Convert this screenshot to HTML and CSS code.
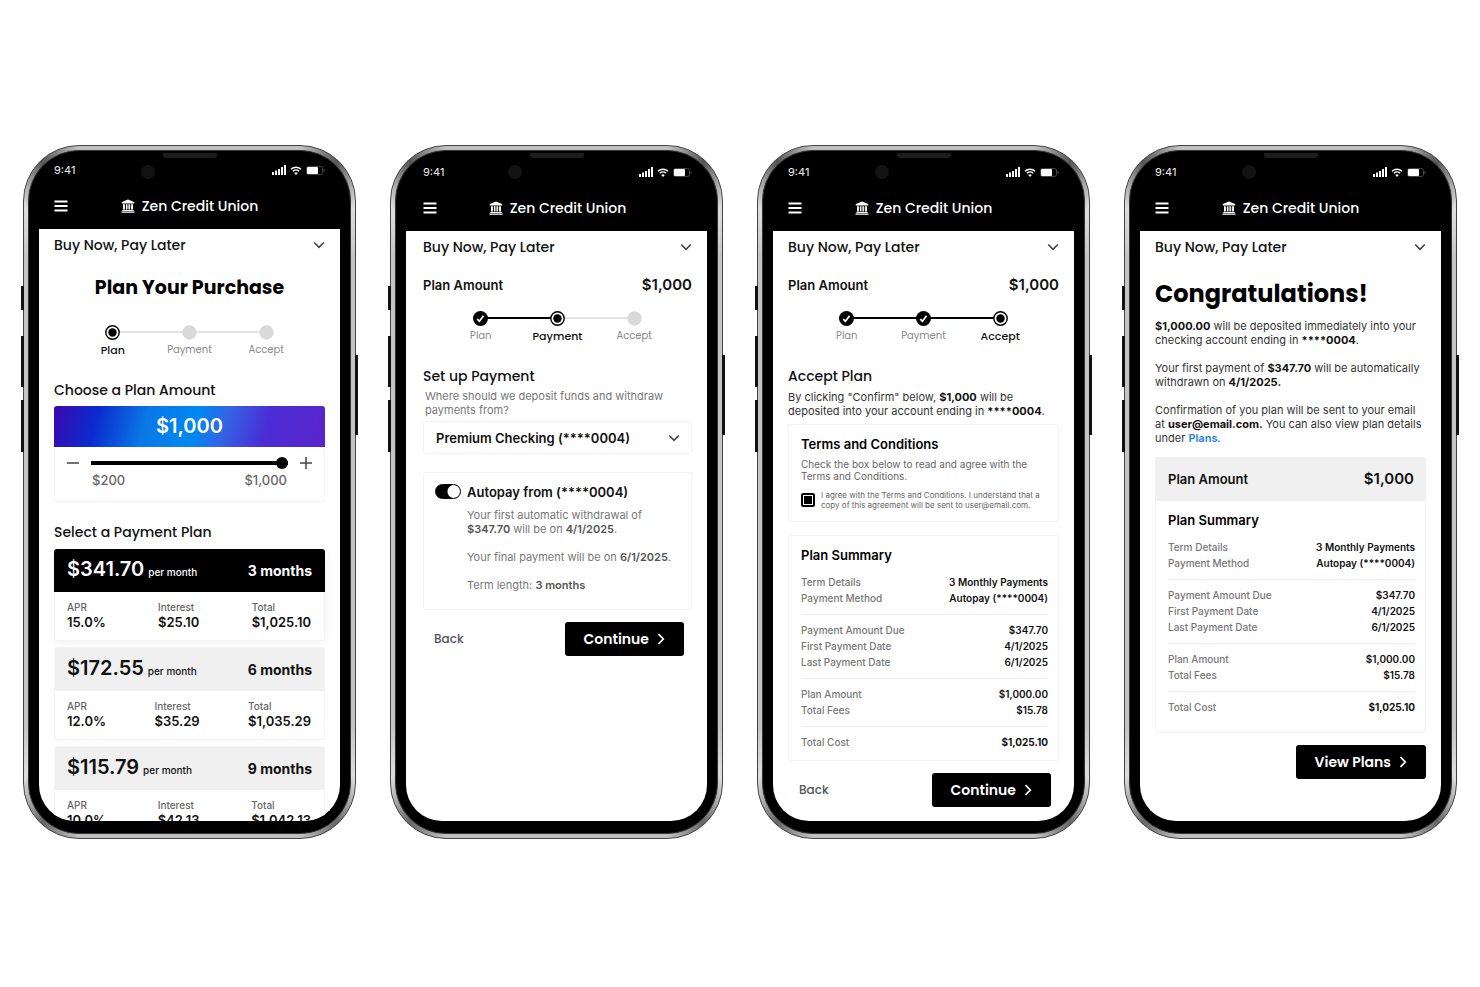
FILE: index.html
```
<!DOCTYPE html>
<html lang="en">
<head>
  <meta charset="UTF-8" />
  <meta name="viewport" content="width=device-width, initial-scale=1.0" />
  <title>Buy Now, Pay Later | Zen Credit Union</title>
  <link rel="stylesheet" href="styles.css">
</head>
<body>

<!-- shared icons -->
<svg class="sprite" aria-hidden="true">
  <symbol id="i-menu" viewBox="0 0 14 12">
    <path d="M0.5 1.5h13M0.5 6h13M0.5 10.5h13" stroke="currentColor" stroke-width="1.8" fill="none" />
  </symbol>
  <symbol id="i-bank" viewBox="0 0 14 14">
    <path fill="currentColor" d="M7 0.4L13.2 3v1.6H0.8V3zM2 5.2h1.9v5.4H2zM4.9 5.2h1.1v5.4H4.9zM6.5 5.2h1.1v5.4H6.5zM8.1 5.2h1.1v5.4H8.1zM10.1 5.2H12v5.4h-1.9zM1.3 11h11.4v1H1.3zM0.5 12.4h13v1.3h-13z" />
  </symbol>
  <symbol id="i-signal" viewBox="0 0 14 10">
    <path fill="currentColor" d="M0 7h2v3H0zM3 5.5h2V10H3zM6 4h2v6H6zM9 2h2v8H9zM12 0h2v10h-2z" />
  </symbol>
  <symbol id="i-wifi" viewBox="0 0 12 9">
    <path d="M1 3.2a7.2 7.2 0 0 1 10 0M2.9 5.2a4.5 4.5 0 0 1 6.2 0" stroke="currentColor" stroke-width="1.4" fill="none" />
    <path fill="currentColor" d="M6 8.9L4.2 7a2.600 2.600 0 0 1 3.600 0z" />
  </symbol>
  <symbol id="i-battery" viewBox="0 0 19 9">
    <rect x="0.5" y="0.5" width="16" height="8" rx="2" fill="none" stroke="#444" />
    <rect x="1" y="1" width="11" height="7" rx="1" fill="currentColor" />
    <path d="M18 3v3" stroke="#444" />
  </symbol>
  <symbol id="i-down" viewBox="0 0 12 8">
    <path d="M1.2 1.5L6 6.3l4.8-4.8" stroke="currentColor" stroke-width="1.600" fill="none" />
  </symbol>
  <symbol id="i-right" viewBox="0 0 8 12">
    <path d="M1.5 1.2L6.3 6l-4.8 4.8" stroke="currentColor" stroke-width="1.700" fill="none" />
  </symbol>
  <symbol id="i-done" viewBox="0 0 15 15">
    <circle cx="7.5" cy="7.5" r="7.5" fill="#000" />
    <path d="M4.2 8.2l2.200 2 4.200-5.400" stroke="#fff" stroke-width="1.700" fill="none" />
  </symbol>
  <symbol id="i-current" viewBox="0 0 15 15">
    <circle cx="7.5" cy="7.5" r="6.700" fill="#fff" stroke="#000" stroke-width="1.400" />
    <circle cx="7.5" cy="7.5" r="4.200" fill="#000" />
  </symbol>
  <symbol id="i-todo" viewBox="0 0 15 15">
    <circle cx="7.5" cy="7.5" r="7.200" fill="#d9d9d9" />
  </symbol>
  <symbol id="i-minus" viewBox="0 0 12 12">
    <path d="M0 6h12" stroke="currentColor" stroke-width="1.500" />
  </symbol>
  <symbol id="i-plus" viewBox="0 0 12 12">
    <path d="M0 6h12M6 0v12" stroke="currentColor" stroke-width="1.500" />
  </symbol>
</svg>

<main class="phones">

  <!-- Step 1: plan -->
  <section class="phone phone-plan">
    <div class="bezel">
      <div class="status">
        <span>9:41</span>
        <span class="status-icons">
          <svg width="14" height="10"><use href="#i-signal" /></svg>
          <svg width="12" height="9"><use href="#i-wifi" /></svg>
          <svg width="19" height="9"><use href="#i-battery" /></svg>
        </span>
      </div>
      <header class="appbar">
        <button type="button" class="menu" aria-label="Menu"><svg width="14" height="12"><use href="#i-menu" /></svg></button>
        <div class="brand"><svg width="14" height="14"><use href="#i-bank" /></svg>Zen Credit Union</div>
      </header>
      <div class="screen">
        <button type="button" class="product">Buy Now, Pay Later <svg width="12" height="8"><use href="#i-down" /></svg></button>
        <h1 class="title">Plan Your Purchase</h1>
        <ol class="stepper">
          <li class="current"><svg width="15" height="15"><use href="#i-current" /></svg>Plan</li>
          <li><svg width="15" height="15"><use href="#i-todo" /></svg>Payment</li>
          <li><svg width="15" height="15"><use href="#i-todo" /></svg>Accept</li>
        </ol>

        <h2>Choose a Plan Amount</h2>
        <div class="card amount">
          <output class="amount-value" for="amount">$1,000</output>
          <div class="amount-slider">
            <button type="button" aria-label="Decrease"><svg width="12" height="12"><use href="#i-minus" /></svg></button>
            <input type="range" id="amount" aria-label="Plan amount" min="200" max="1000" value="1000" />
            <button type="button" aria-label="Increase"><svg width="12" height="12"><use href="#i-plus" /></svg></button>
          </div>
          <div class="amount-range"><span>$200</span><span>$1,000</span></div>
        </div>

        <h2>Select a Payment Plan</h2>
        <div class="plans">
          <article class="card plan selected">
            <div class="plan-head"><p><b>$341.70</b> per month</p><strong>3 months</strong></div>
            <dl>
              <div><dt>APR</dt><dd>15.0%</dd></div>
              <div><dt>Interest</dt><dd>$25.10</dd></div>
              <div><dt>Total</dt><dd>$1,025.10</dd></div>
            </dl>
          </article>
          <article class="card plan">
            <div class="plan-head"><p><b>$172.55</b> per month</p><strong>6 months</strong></div>
            <dl>
              <div><dt>APR</dt><dd>12.0%</dd></div>
              <div><dt>Interest</dt><dd>$35.29</dd></div>
              <div><dt>Total</dt><dd>$1,035.29</dd></div>
            </dl>
          </article>
          <article class="card plan">
            <div class="plan-head"><p><b>$115.79</b> per month</p><strong>9 months</strong></div>
            <dl>
              <div><dt>APR</dt><dd>10.0%</dd></div>
              <div><dt>Interest</dt><dd>$42.13</dd></div>
              <div><dt>Total</dt><dd>$1,042.13</dd></div>
            </dl>
          </article>
        </div>
      </div>
    </div>
  </section>

  <!-- Step 2: payment -->
  <section class="phone phone-payment">
    <div class="bezel">
      <div class="status">
        <span>9:41</span>
        <span class="status-icons">
          <svg width="14" height="10"><use href="#i-signal" /></svg>
          <svg width="12" height="9"><use href="#i-wifi" /></svg>
          <svg width="19" height="9"><use href="#i-battery" /></svg>
        </span>
      </div>
      <header class="appbar">
        <button type="button" class="menu" aria-label="Menu"><svg width="14" height="12"><use href="#i-menu" /></svg></button>
        <div class="brand"><svg width="14" height="14"><use href="#i-bank" /></svg>Zen Credit Union</div>
      </header>
      <div class="screen">
        <button type="button" class="product">Buy Now, Pay Later <svg width="12" height="8"><use href="#i-down" /></svg></button>
        <p class="plan-amount"><span>Plan Amount</span><b>$1,000</b></p>
        <ol class="stepper">
          <li class="done"><svg width="15" height="15"><use href="#i-done" /></svg>Plan</li>
          <li class="current"><svg width="15" height="15"><use href="#i-current" /></svg>Payment</li>
          <li><svg width="15" height="15"><use href="#i-todo" /></svg>Accept</li>
        </ol>

        <h2>Set up Payment</h2>
        <label class="hint" for="account">Where should we deposit funds and withdraw payments from?</label>
        <div class="card account">
          <select id="account">
            <option>Premium Checking (****0004)</option>
          </select>
          <svg width="12" height="8"><use href="#i-down" /></svg>
        </div>

        <div class="card autopay">
          <input type="checkbox" class="toggle" id="autopay" checked />
          <div>
            <label for="autopay">Autopay from (****0004)</label>
            <p>Your first automatic withdrawal of <b>$347.70</b> will be on <b>4/1/2025</b>.</p>
            <p>Your final payment will be on <b>6/1/2025</b>.</p>
            <p>Term length: <b>3 months</b></p>
          </div>
        </div>

        <div class="actions">
          <button type="button" class="back">Back</button>
          <button type="button" class="primary">Continue <svg width="8" height="12"><use href="#i-right" /></svg></button>
        </div>
      </div>
    </div>
  </section>

  <!-- Step 3: accept -->
  <section class="phone">
    <div class="bezel">
      <div class="status">
        <span>9:41</span>
        <span class="status-icons">
          <svg width="14" height="10"><use href="#i-signal" /></svg>
          <svg width="12" height="9"><use href="#i-wifi" /></svg>
          <svg width="19" height="9"><use href="#i-battery" /></svg>
        </span>
      </div>
      <header class="appbar">
        <button type="button" class="menu" aria-label="Menu"><svg width="14" height="12"><use href="#i-menu" /></svg></button>
        <div class="brand"><svg width="14" height="14"><use href="#i-bank" /></svg>Zen Credit Union</div>
      </header>
      <div class="screen">
        <button type="button" class="product">Buy Now, Pay Later <svg width="12" height="8"><use href="#i-down" /></svg></button>
        <p class="plan-amount"><span>Plan Amount</span><b>$1,000</b></p>
        <ol class="stepper">
          <li class="done"><svg width="15" height="15"><use href="#i-done" /></svg>Plan</li>
          <li class="done"><svg width="15" height="15"><use href="#i-done" /></svg>Payment</li>
          <li class="current"><svg width="15" height="15"><use href="#i-current" /></svg>Accept</li>
        </ol>

        <h2>Accept Plan</h2>
        <p class="copy">By clicking "Confirm" below, <b>$1,000</b> will be deposited into your account ending in <b>****0004</b>.</p>

        <div class="card terms">
          <h3>Terms and Conditions</h3>
          <p>Check the box below to read and agree with the Terms and Conditions.</p>
          <div class="agree">
            <input type="checkbox" id="agree" checked />
            <label for="agree">I agree with the Terms and Conditions. I understand that a copy of this agreement will be sent to user@email.com.</label>
          </div>
        </div>

        <div class="card summary">
          <h3>Plan Summary</h3>
          <table>
            <tbody>
              <tr><th scope="row">Term Details</th><td>3 Monthly Payments</td></tr>
              <tr><th scope="row">Payment Method</th><td>Autopay (****0004)</td></tr>
            </tbody>
            <tbody>
              <tr><th scope="row">Payment Amount Due</th><td>$347.70</td></tr>
              <tr><th scope="row">First Payment Date</th><td>4/1/2025</td></tr>
              <tr><th scope="row">Last Payment Date</th><td>6/1/2025</td></tr>
            </tbody>
            <tbody>
              <tr><th scope="row">Plan Amount</th><td>$1,000.00</td></tr>
              <tr><th scope="row">Total Fees</th><td>$15.78</td></tr>
            </tbody>
            <tbody class="total">
              <tr><th scope="row">Total Cost</th><td>$1,025.10</td></tr>
            </tbody>
          </table>
        </div>

        <div class="actions">
          <button type="button" class="back">Back</button>
          <button type="button" class="primary">Continue <svg width="8" height="12"><use href="#i-right" /></svg></button>
        </div>
      </div>
    </div>
  </section>

  <!-- Confirmation -->
  <section class="phone">
    <div class="bezel">
      <div class="status">
        <span>9:41</span>
        <span class="status-icons">
          <svg width="14" height="10"><use href="#i-signal" /></svg>
          <svg width="12" height="9"><use href="#i-wifi" /></svg>
          <svg width="19" height="9"><use href="#i-battery" /></svg>
        </span>
      </div>
      <header class="appbar">
        <button type="button" class="menu" aria-label="Menu"><svg width="14" height="12"><use href="#i-menu" /></svg></button>
        <div class="brand"><svg width="14" height="14"><use href="#i-bank" /></svg>Zen Credit Union</div>
      </header>
      <div class="screen">
        <button type="button" class="product">Buy Now, Pay Later <svg width="12" height="8"><use href="#i-down" /></svg></button>
        <h1 class="congrats">Congratulations!</h1>
        <div class="copy">
          <p><b>$1,000.00</b> will be deposited immediately into your checking account ending in <b>****0004</b>.</p>
          <p>Your first payment of <b>$347.70</b> will be automatically withdrawn on <b>4/1/2025.</b></p>
          <p>Confirmation of you plan will be sent to your email at <b>user@email.com.</b> You can also view plan details under <a href="#plans">Plans</a>.</p>
        </div>

        <div class="card summary receipt">
          <p class="receipt-head"><span>Plan Amount</span><b>$1,000</b></p>
          <h3>Plan Summary</h3>
          <table>
            <tbody>
              <tr><th scope="row">Term Details</th><td>3 Monthly Payments</td></tr>
              <tr><th scope="row">Payment Method</th><td>Autopay (****0004)</td></tr>
            </tbody>
            <tbody>
              <tr><th scope="row">Payment Amount Due</th><td>$347.70</td></tr>
              <tr><th scope="row">First Payment Date</th><td>4/1/2025</td></tr>
              <tr><th scope="row">Last Payment Date</th><td>6/1/2025</td></tr>
            </tbody>
            <tbody>
              <tr><th scope="row">Plan Amount</th><td>$1,000.00</td></tr>
              <tr><th scope="row">Total Fees</th><td>$15.78</td></tr>
            </tbody>
            <tbody class="total">
              <tr><th scope="row">Total Cost</th><td>$1,025.10</td></tr>
            </tbody>
          </table>
        </div>

        <div class="actions end">
          <button type="button" class="primary">View Plans <svg width="8" height="12"><use href="#i-right" /></svg></button>
        </div>
      </div>
    </div>
  </section>

</main>

</body>
</html>
```
FILE: styles.css
```
* {
  box-sizing: border-box;
}
body {
  font-family: Inter, sans-serif;
  font-size: 11px;
  line-height: 14px;
  background: #fff;
  color: #111;
  margin: 0;
}
h1, h2, h3, p, ol, dl, dd {
  margin: 0;
  padding: 0;
}
button {
  font: inherit;
  color: inherit;
  background: none;
  border: none;
  padding: 0;
  cursor: pointer;
}
svg {
  display: block;
  flex: none;
}
.sprite {
  position: absolute;
  width: 0;
  height: 0;
}

.brand, .product, .title, .congrats, .stepper, .actions, h2 {
  font-family: Poppins, Inter, sans-serif;
}

.phones {
  display: grid;
  grid-template-columns: repeat(4, 1fr);
  gap: 34px;
  padding: 145px 23px;
}

/* device */
.phone {
  position: relative;
  aspect-ratio: 333 / 694;
  padding: 4px;
  border: 1px solid #444;
  border-radius: 56px;
  background: conic-gradient(from 0deg, #c0c0c0 0 18deg, #555 24deg, #ddd 30deg, #c4c4c4 35deg 145deg, #ddd 150deg, #666 156deg, #c0c0c0 162deg 198deg, #666 204deg, #ddd 210deg, #c4c4c4 215deg 325deg, #ddd 330deg, #555 336deg, #c0c0c0 342deg);
}
.phone::before,
.phone::after {
  content: "";
  position: absolute;
  width: 3px;
}
.phone::before {
  left: -3px;
  top: 140px;
  height: 166px;
  background: linear-gradient(#111 0 24px, transparent 24px 50px, #111 50px 101px, transparent 101px 114px, #111 114px);
}
.phone::after {
  right: -3px;
  top: 209px;
  height: 80px;
  background: #111;
}
.bezel {
  position: relative;
  display: flex;
  flex-direction: column;
  height: 100%;
  padding: 0 10px 12px;
  border: 1px solid #333;
  border-radius: 51px;
  background: #000;
}
.bezel::before,
.bezel::after {
  content: "";
  position: absolute;
}
.bezel::before {
  top: 2px;
  left: 50%;
  width: 54px;
  height: 5px;
  margin-left: -27px;
  border-radius: 0 0 3px 3px;
  background: #1c1c1c;
}
.bezel::after {
  top: 14px;
  left: 35%;
  width: 14px;
  height: 14px;
  border-radius: 50%;
  background: #131313;
}
.status {
  display: flex;
  justify-content: space-between;
  align-items: center;
  height: 30px;
  padding: 12px 15px 0;
  color: #eee;
}
.status-icons {
  display: flex;
  align-items: center;
  gap: 4px;
  color: #fff;
}
.appbar {
  display: grid;
  grid-template-columns: 1fr auto 1fr;
  align-items: center;
  height: 50px;
  padding: 4px 15px 0;
  color: #fff;
}
.brand {
  display: flex;
  align-items: center;
  gap: 7px;
  font-size: 14px;
  font-weight: 500;
}
.phone-plan .status {
  height: 28px;
  padding-top: 10px;
}

.screen {
  flex: 1;
  min-height: 0;
  overflow: hidden;
  padding: 0 15px;
  border-radius: 0 0 36px 36px;
  background: #fff;
}
.phone-payment .screen,
.phone-payment .appbar,
.phone-payment .status {
  padding-left: 17px;
}
.product {
  display: flex;
  justify-content: space-between;
  align-items: center;
  width: 100%;
  height: 32px;
  font-size: 14px;
  font-weight: 500;
}
.product svg {
  color: #444;
}
.title {
  margin-top: 13px;
  font-size: 19px;
  line-height: 28px;
  text-align: center;
  color: #000;
}
.congrats {
  margin: 14px 0 8px;
  font-size: 24px;
  line-height: 34px;
  color: #000;
}
h2 {
  font-size: 14px;
  line-height: 20px;
  font-weight: 500;
}
h3 {
  font-size: 13px;
  line-height: 16px;
  font-weight: 600;
  color: #000;
}
.plan-amount {
  display: flex;
  justify-content: space-between;
  align-items: center;
  height: 20px;
  margin-top: 12px;
  font-size: 13px;
  font-weight: 600;
}
.plan-amount b, .receipt-head b {
  font-size: 15px;
  font-weight: 600;
}

/* stepper */
.stepper {
  display: grid;
  grid-template-columns: repeat(3, 1fr);
  width: 230px;
  margin: 16px auto 23px;
  list-style: none;
  font-size: 10px;
  color: #888;
}
.stepper li {
  position: relative;
  display: flex;
  flex-direction: column;
  align-items: center;
  gap: 3px;
}
.stepper li + li::before {
  content: "";
  position: absolute;
  top: 6px;
  right: 50%;
  width: 100%;
  height: 2px;
  background: #e4e4e4;
}
.stepper .done + li::before {
  background: #000;
}
.stepper svg {
  position: relative;
  z-index: 1;
}
.stepper .current {
  font-size: 11px;
  font-weight: 500;
  color: #111;
}
.phone-plan .stepper {
  margin-top: 23px;
}

/* cards */
.card {
  border: 1px solid #f4f4f4;
  border-radius: 3px;
  background: #fff;
}
.amount {
  height: 96px;
  margin: 6px 0 20px;
}
.amount-value {
  display: block;
  margin: -1px -1px 0;
  border-radius: 3px 3px 0 0;
  background: linear-gradient(105deg, #3c08b0 0, #0a2bcd 16%, #0a78e6 34%, #0088f0 52%, #3265e6 62%, #4b2bd4 78%, #5a24cc 100%);
  color: #fff;
  font-size: 20px;
  line-height: 41px;
  font-weight: 600;
  text-align: center;
}
.amount-slider {
  display: flex;
  align-items: center;
  gap: 12px;
  height: 16px;
  margin-top: 8px;
  padding: 0 12px;
  color: #444;
}
.amount-slider input {
  flex: 1;
  min-width: 0;
  height: 12px;
  margin: 0;
  appearance: none;
  background: linear-gradient(#000, #000) center / 100% 4px no-repeat;
}
.amount-slider input::-webkit-slider-thumb {
  appearance: none;
  width: 12px;
  height: 12px;
  border-radius: 50%;
  background: #000;
}
.amount-range {
  display: flex;
  justify-content: space-between;
  padding: 1px 37px 0;
  font-size: 13px;
  line-height: 16px;
  font-weight: 500;
  color: #666;
}
.plans {
  display: grid;
  gap: 6px;
  margin-top: 7px;
}
.plan.selected {
  box-shadow: 0 2px 12px rgba(0,0,0,0.05);
}
.plan-head {
  display: flex;
  justify-content: space-between;
  align-items: center;
  height: 43px;
  padding: 0 12px;
  background: #f0f0f0;
  font-size: 10px;
  font-weight: 500;
}
.plan-head p {
  display: flex;
  align-items: baseline;
  gap: 4px;
  line-height: 24px;
}
.plan-head b {
  font-size: 20px;
  font-weight: 600;
}
.plan-head strong {
  font-size: 14px;
  font-weight: 700;
}
.plan.selected .plan-head {
  margin: -1px -1px 0;
  padding: 0 13px;
  border-radius: 3px 3px 0 0;
  background: #000;
  color: #fff;
}
.plan dl {
  display: flex;
  justify-content: space-between;
  padding: 8px 13px 9px 12px;
}
.plan dt {
  font-size: 10px;
  font-weight: 500;
  color: #666;
}
.plan dd {
  font-size: 13px;
  line-height: 17px;
  font-weight: 600;
}

/* payment */
.hint {
  display: block;
  margin-top: 3px;
  padding: 0 2px;
  color: #777;
}
.account {
  display: grid;
  align-items: center;
  margin: 4px 0 18px;
}
.account select, .account svg {
  grid-area: 1 / 1;
}
.account select {
  width: 100%;
  height: 31px;
  padding: 0 12px;
  border: none;
  appearance: none;
  background: none;
  color: #111;
  font: 600 13px Inter, sans-serif;
}
.account svg {
  justify-self: end;
  margin-right: 11px;
  color: #444;
}
.autopay {
  display: flex;
  gap: 6px;
  padding: 11px 11px 17px;
  color: #777;
}
.autopay label {
  font-size: 13px;
  line-height: 16px;
  font-weight: 600;
  color: #111;
}
.autopay p {
  margin-top: 14px;
}
.autopay label + p {
  margin-top: 8px;
}
.autopay b {
  font-weight: 600;
  color: #555;
}
.toggle {
  flex: none;
  width: 26px;
  height: 15px;
  margin: 0;
  border: 1px solid #000;
  border-radius: 8px;
  appearance: none;
  background: radial-gradient(circle at 6px 50%, #000 6px, #fff 7px);
}
.toggle:checked {
  background: radial-gradient(circle at 18px 50%, #fff 6px, #000 7px);
}
.actions {
  display: flex;
  justify-content: space-between;
  align-items: center;
  margin-top: 12px;
  padding: 0 8px 0 11px;
}
.actions.end {
  justify-content: flex-end;
  padding: 0;
}
.back {
  font-size: 12px;
  font-weight: 500;
  color: #555;
}
.primary {
  display: flex;
  align-items: center;
  gap: 8px;
  height: 34px;
  padding: 0 19px;
  border-radius: 3px;
  background: #000;
  color: #fff;
  font-size: 14px;
  font-weight: 600;
}

/* terms and summary */
.copy {
  margin-top: 4px;
  color: #333;
}
.copy p + p {
  margin-top: 14px;
}
.copy b {
  font-weight: 700;
  color: #111;
}
.copy a {
  color: #1f7fe0;
  font-weight: 600;
  text-decoration: none;
}
.terms {
  margin: 6px 0 13px;
  padding: 11px 12px;
  font-size: 10px;
  line-height: 12px;
  color: #666;
}
.terms p {
  margin-top: 6px;
}
.agree {
  display: flex;
  align-items: center;
  gap: 6px;
  margin-top: 8px;
}
.agree label {
  font-size: 8px;
  line-height: 10px;
}
.agree input {
  flex: none;
  width: 14px;
  height: 14px;
  margin: 0;
  border: 2px solid #000;
  border-radius: 2px;
  appearance: none;
}
.agree input:checked {
  background: linear-gradient(#000, #000) center / 8px 8px no-repeat;
}
.summary {
  padding: 11px 10px 2px 12px;
}
.summary table {
  width: 100%;
  margin-top: 3px;
  border-collapse: collapse;
}
.summary tbody + tbody {
  border-top: 1px solid #eee;
}
.summary th, .summary td {
  height: 16px;
  padding: 0;
  font-size: 10px;
}
.summary th {
  font-weight: 500;
  text-align: left;
  color: #777;
}
.summary td {
  font-weight: 600;
  text-align: right;
}
.summary .total td {
  font-weight: 700;
}
.summary tr:first-child > * {
  height: 24px;
  padding-top: 8px;
}
.summary tr:last-child > * {
  height: 24px;
  padding-bottom: 8px;
}
.summary tr:only-child > * {
  height: 32px;
}
.summary.receipt {
  margin-top: 12px;
  padding-bottom: 9px;
}
.receipt-head {
  display: flex;
  justify-content: space-between;
  align-items: center;
  height: 44px;
  margin: -12px -11px 11px -13px;
  padding: 0 12px 0 13px;
  border-radius: 3px 3px 0 0;
  background: #f0f0f0;
  font-size: 13px;
  font-weight: 600;
}
```
